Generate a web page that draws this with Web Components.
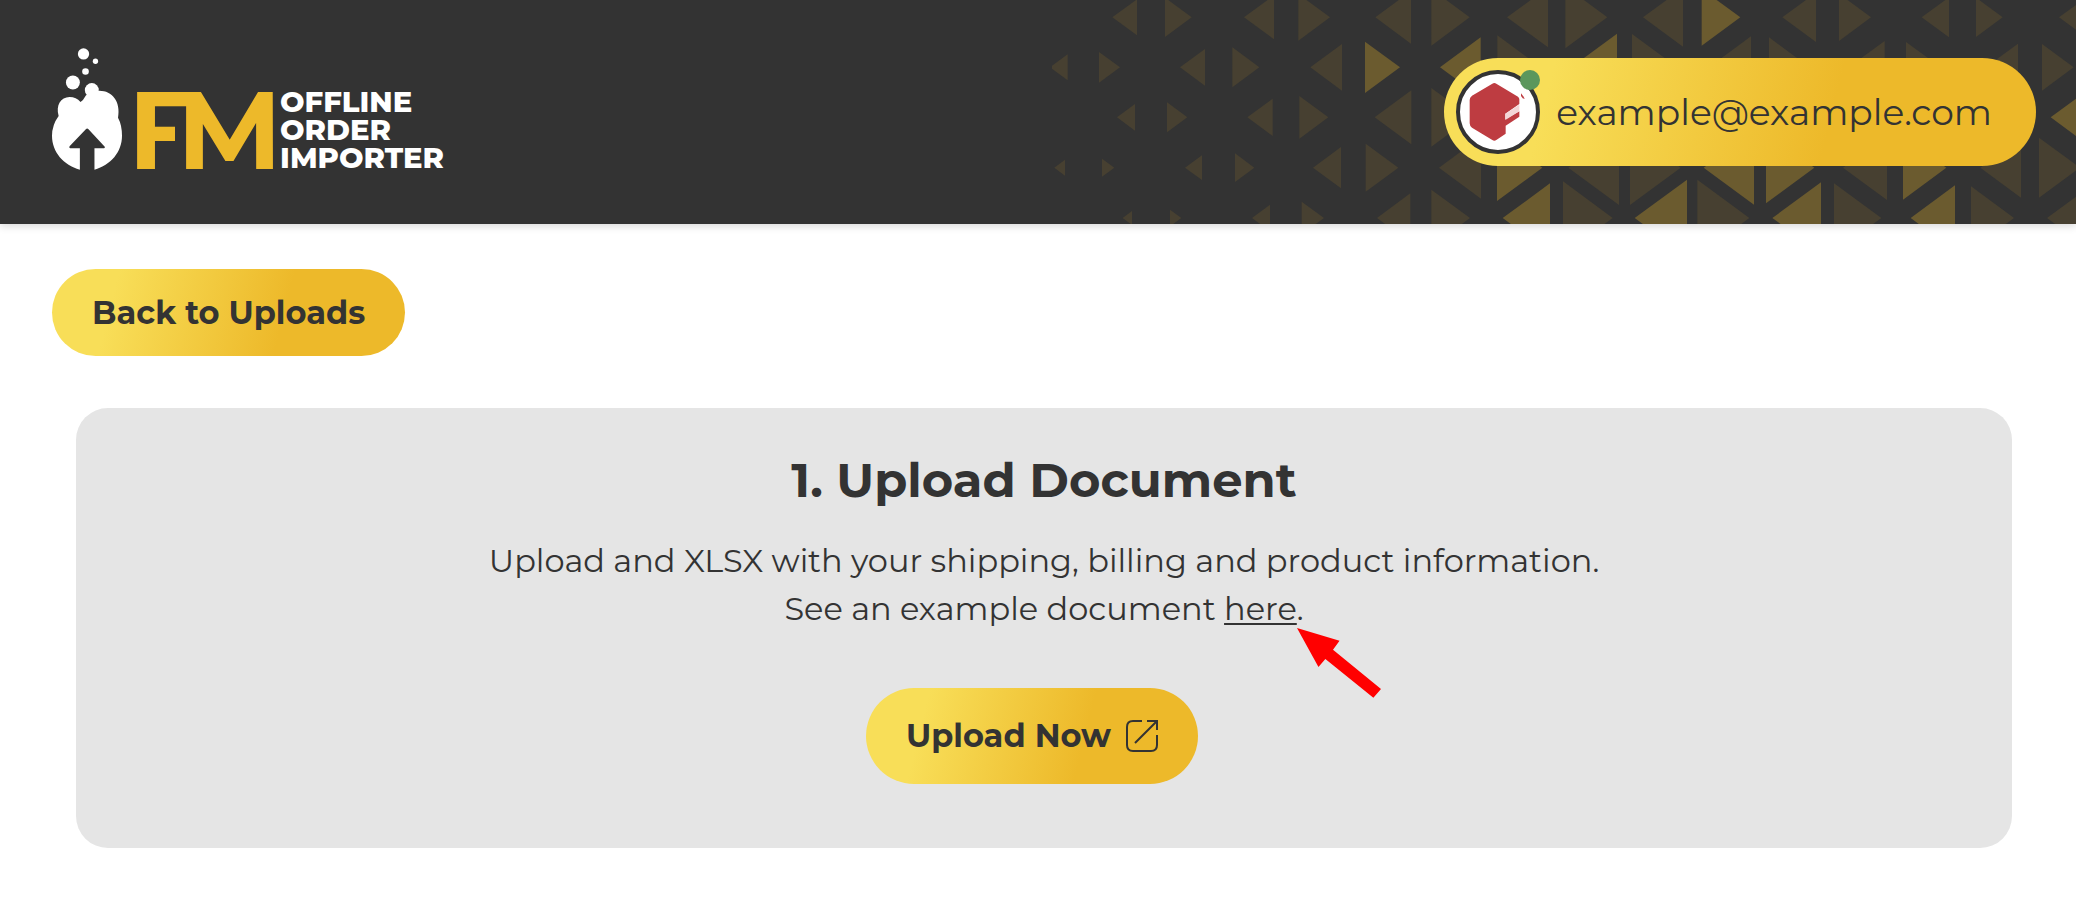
<!DOCTYPE html>
<html lang="en">
<head>
<meta charset="utf-8">
<meta name="viewport" content="width=device-width, initial-scale=1">
<title>FM Offline Order Importer</title>
<style>
  :root {
    --ink: #333333;
    --gold: #edb92a;
    --gold-gradient: linear-gradient(104deg, #f8de58 18%, #edb92a 65%);
  }
  body {
    margin: 0;
    background: #fff;
    color: var(--ink);
    font-family: Montserrat, Inter, "Open Sans", sans-serif;
    font-size: 32px;
    line-height: 48px;
  }
</style>
</head>
<body>
<fm-app></fm-app>

<script>
const define = (name, html, setup) => {
  const template = document.createElement('template');
  template.innerHTML = html;
  customElements.define(name, class extends HTMLElement {
    constructor() {
      super();
      this.attachShadow({ mode: 'open' }).append(template.content.cloneNode(true));
      if (setup) setup(this.shadowRoot);
    }
  });
};

/* Triangle pattern: each entry is [tip x, base x, bright], in thirds of a pixel. */
const rows = [
  { y: 52, t: [[181,255],[419,339],[576,666],[834,739],[970,1077],[1253,1138],[1365,1488],[1666,1540],[1773,1893],[2065,1949,1],[2191,2292],[2457,2361],[2609,2691],[2852,2772],[3021,3110]] },
  { y: 202, t: [[-6,47],[204,141],[384,459],[622,541],[775,870],[1044,939,1],[1164,1286,1],[1466,1336],[1558,1695,1],[1876,1740],[1971,2097],[2273,2151],[2390,2498],[2666,2562],[2801,2898],[3065,2970]] },
  { y: 352, t: [[195,249],[406,345],[586,662],[829,742],[968,1078],[1258,1138],[2996,3116,1]] },
  { y: 503, t: [[7,39],[187,150],[399,450],[607,549],[783,867],[1039,941],[1161,1287],[1471,1335,1],[1549,1701],[1886,1734],[1955,2106,1],[2287,2142,1],[2373,2505],[2683,2553,1],[2785,2907],[3084,2961]] },
  { y: 654, t: [[212,240],[388,354],[600,654],[816,749],[975,1075],[1254,1138],[1352,1494,1],[1682,1533],[1748,1905,1],[2092,1936],[2161,2307,1],[2488,2346],[2576,2709,1],[2886,2757],[2985,3105]] }
];

define('fm-pattern', `
  <style>
    :host { display: block; }
    svg { display: block; width: 1024px; height: 100%; }
  </style>
  <svg viewBox="0 0 3072 672" preserveAspectRatio="xMaxYMin slice" aria-hidden="true">
    <path class="dim" fill="#474031"/>
    <path class="lit" fill="#6b5b2f"/>
  </svg>`, root => {
  const d = ['', ''];
  for (const { y, t } of rows) {
    for (const [tip, base, lit = 0] of t) {
      const half = Math.round(Math.abs(base - tip) * 0.735);
      d[lit] += `M${tip} ${y}L${base} ${y - half}V${y + half}Z`;
    }
  }
  root.querySelector('.dim').setAttribute('d', d[0]);
  root.querySelector('.lit').setAttribute('d', d[1]);
});

define('fm-logo', `
  <style>
    :host { display: block; }
    a { display: flex; align-items: flex-end; color: #fff; text-decoration: none; }
    svg { display: block; width: 70px; height: 122px; }
    .fm { display: flex; margin-left: 6px; color: var(--gold); font-size: 110px; line-height: 80px; font-weight: 700; }
    /* The F shares its top arm with the M; its middle arm is cut short of the stem. */
    .f { width: 49px; clip-path: polygon(0 0, 64px 0, 64px 22px, 47px 22px, 47px 100%, 0 100%); }
    .name { margin: 0 0 -2px -2px; font-size: 29px; line-height: 28px; font-weight: 800; }
    .name span { display: block; }
  </style>
  <a href="#home">
    <svg viewBox="66 54 211 366" aria-hidden="true" fill="#fff">
      <circle cx="161" cy="71" r="17"/><circle cx="197" cy="93" r="8"/><circle cx="167" cy="124" r="10"/>
      <circle cx="129" cy="157" r="21"/><circle cx="186" cy="180" r="21"/>
      <path d="M86 258C77 226 92 201 119 201Q139 201 152 216Q160 211 168 196Q185 182 209 182C247 182 274 215 265 263Q277 285 277 318C277 367 243 407 194 420V355H223Q227 354 225 351L176 298Q172 293 168 298L119 349Q116 354 121 355H150V420C101 407 66 367 66 318Q66 285 86 258Z"/>
    </svg>
    <span class="fm"><span class="f">F</span><span>M</span></span>
    <span class="name"><span>OFFLINE</span><span>ORDER</span><span>IMPORTER</span></span>
  </a>`);

define('fm-account', `
  <style>
    :host { display: block; }
    a {
      display: flex; align-items: center; gap: 16px; padding: 12px 44px 12px 12px;
      border-radius: 54px; background: var(--gold-gradient);
      color: var(--ink); text-decoration: none; font-size: 36px; font-weight: 400;
    }
    .avatar {
      position: relative; box-sizing: border-box; width: 84px; height: 84px;
      border: 4px solid var(--ink); border-radius: 50%; background: #fff;
    }
    .avatar svg { display: block; width: 76px; height: 76px; }
    .status { position: absolute; top: -4px; right: -4px; width: 20px; height: 20px; border-radius: 50%; background: #5b975c; }
  </style>
  <a href="#account">
    <span class="avatar">
      <svg viewBox="120 222 228 228" aria-hidden="true">
        <path fill="#be3c41" d="M217 251Q223 247 229 251L294 290Q298 293 298 298V312L256 341V358L298 334V350L257 377V401L229 420Q223 425 217 420L156 383Q149 378 149 370V300Q149 292 156 287Z"/>
        <path fill="#f3d5d6" d="M256 341L298 314V334L256 360Z"/>
        <path fill="#be3c41" d="M303 280L311 290L314 297L308 295L303 288Z"/>
      </svg>
      <span class="status"></span>
    </span>
    <slot></slot>
  </a>`);

define('fm-header', `
  <style>
    :host {
      display: flex; align-items: center; justify-content: space-between; position: relative;
      padding: 48px 40px 48px 52px; background: var(--ink); box-shadow: 0 2px 8px rgba(0, 0, 0, .16);
    }
    fm-pattern { position: absolute; inset: 0 0 0 auto; overflow: hidden; }
    fm-logo, fm-account { position: relative; }
    fm-logo { padding-bottom: 6px; }
  </style>
  <fm-pattern></fm-pattern>
  <fm-logo></fm-logo>
  <fm-account>example@example.com</fm-account>`);

define('fm-button', `
  <style>
    :host { display: inline-block; }
    button {
      display: flex; align-items: center; gap: 14px; margin: 0; border: 0;
      padding: var(--pad, 20px 40px); border-radius: 48px; background: var(--gold-gradient);
      color: var(--ink); font: inherit; font-weight: 700; line-height: 48px; cursor: pointer;
    }
  </style>
  <button type="button"><slot></slot><slot name="icon"></slot></button>`);

define('fm-open-icon', `
  <style>
    :host { display: block; }
    svg { display: block; width: 33px; height: 34px; }
  </style>
  <svg viewBox="0 0 33 34" fill="none" stroke="#333" stroke-width="2" aria-hidden="true">
    <path d="M17 2H8Q2 2 2 8V26Q2 32 8 32H26Q32 32 32 26V16M22 2H32V11M32 2L10 24"/>
  </svg>`);

define('fm-pointer', `
  <style>
    :host { display: block; }
    svg { display: block; width: 84px; height: 70px; }
  </style>
  <svg viewBox="0 0 231 210" preserveAspectRatio="none" aria-hidden="true"><path fill="#f00" d="M0 0L117 38L99 65L231 183L210 209L78 93L59 117Z"/></svg>`);

define('fm-step', `
  <style>
    :host {
      display: flex; flex-direction: column; align-items: center; padding: 40px 40px 64px;
      border-radius: 32px; background: #e5e5e5; text-align: center;
    }
    h2 { margin: 0; font-size: 48px; line-height: 64px; font-weight: 700; }
    .text { margin: 25px 0 55px; }
  </style>
  <h2><slot name="title"></slot></h2>
  <div class="text"><slot></slot></div>
  <slot name="action"></slot>`);

define('fm-app', `
  <style>
    :host { display: block; }
    main { padding: 45px 64px 64px 52px; }
    .back { display: block; width: fit-content; --pad: 20px 40px 19px; }
    fm-step { margin: 52px 0 0 24px; }
    p { margin: 0; }
    a { position: relative; color: inherit; text-decoration: underline; text-decoration-thickness: 2px; text-underline-offset: 3px; }
    fm-pointer { position: absolute; top: 100%; left: 100%; }
    .upload { margin-right: 24px; --pad: 24px 40px; }
  </style>
  <fm-header></fm-header>
  <main>
    <fm-button class="back">Back to Uploads</fm-button>
    <fm-step>
      <span slot="title">1. Upload Document</span>
      <p>Upload and XLSX with your shipping, billing and product information.</p>
      <p>See an example document <a href="#example">here<fm-pointer></fm-pointer></a>.</p>
      <fm-button slot="action" class="upload">Upload Now<fm-open-icon slot="icon"></fm-open-icon></fm-button>
    </fm-step>
  </main>`);
</script>
</body>
</html>
